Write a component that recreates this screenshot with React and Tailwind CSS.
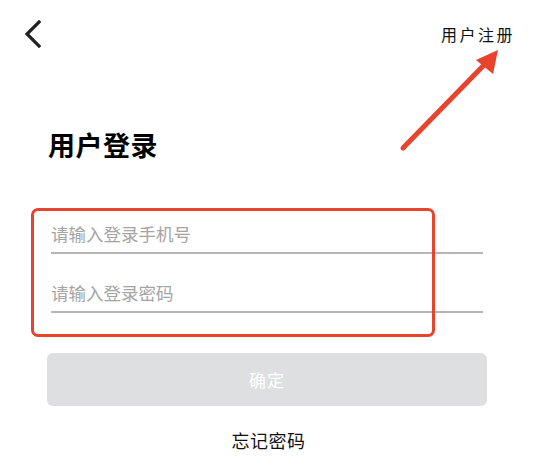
import React from 'react';

const cjk = { fontFamily: '"Noto Sans CJK SC", "Noto Sans", sans-serif' };

const BackIcon = () => (
  <svg width="18" height="28" viewBox="0 0 18 28" fill="none">
    <path d="M15 2 L3 14 L15 26" stroke="#222" strokeWidth="3.2" strokeLinecap="square" strokeLinejoin="miter" />
  </svg>
);

const App = () => {
  return (
    <div className="relative w-[535px] h-[475px] bg-white overflow-hidden" style={cjk}>
      {/* header */}
      <div className="flex h-[68px] items-center justify-between pl-[24px] pr-[20px]">
        <button className="flex items-center">
          <BackIcon />
        </button>
        <span className="text-[16px] tracking-[2.5px] text-[#111]">用户注册</span>
      </div>

      <h1 className="mt-[59px] pl-[48px] text-[27px] font-bold leading-[36px] tracking-[0.5px] text-black">用户登录</h1>

      {/* form */}
      <div className="mt-[51px] flex flex-col gap-[19px] pl-[51px] pr-[52px]">
        <input
          className="h-[40px] border-b-2 border-[#b6b6b6] text-[17.5px] text-[#333] outline-none placeholder:text-[#a4a4a4]"
          placeholder="请输入登录手机号"
        />
        <input
          type="password"
          className="h-[40px] border-b-2 border-[#b6b6b6] text-[17.5px] text-[#333] outline-none placeholder:text-[#a4a4a4]"
          placeholder="请输入登录密码"
        />
      </div>

      <div className="mt-[40px] pl-[47px] pr-[48px]">
        <button className="flex h-[53px] w-full items-center justify-center rounded-[6px] bg-[#dedfe0] text-[17px] tracking-[1px] text-white">
          确定
        </button>
      </div>

      <div className="mt-[21px] pl-[2px] text-center text-[18px] tracking-[0.5px] text-[#111]">忘记密码</div>

      {/* annotation: highlight box */}
      <div className="absolute left-[31px] top-[208px] h-[129px] w-[404px] rounded-[7px] border-[3px] border-[#e8432d]" />

      {/* annotation: arrow */}
      <svg className="absolute left-0 top-0" width="535" height="475" viewBox="0 0 535 475">
        <line x1="403" y1="148" x2="486" y2="63" stroke="#e8432d" strokeWidth="5" strokeLinecap="round" />
        <polygon points="498,50 476,60 493,74" fill="#e8432d" />
      </svg>
    </div>
  );
};

export default App;
